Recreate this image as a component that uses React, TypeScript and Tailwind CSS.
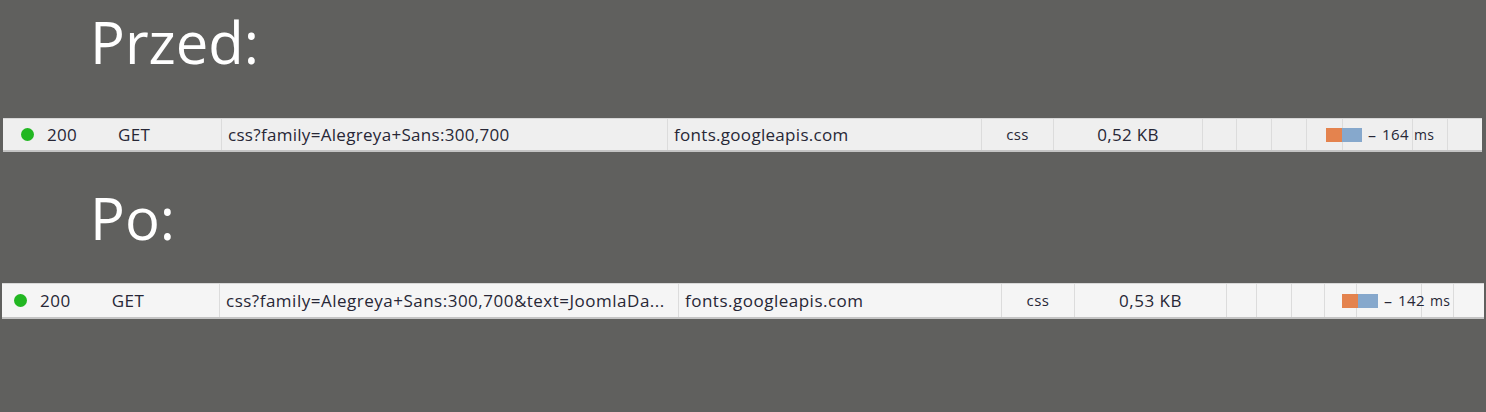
import React from "react";

type RowProps = {
  rowCls: string;
  c1: string;
  c2: string;
  c3: string;
  c4: string;
  c5: string;
  dotCls: string;
  codeCls: string;
  getCls: string;
  url: string;
  size: string;
  ms: string;
  lines: string[];
  barCls: string;
};

function NetRow(p: RowProps) {
  return (
    <div
      className={`flex border-t border-t-[#d8d8d8] border-b-2 border-b-[#c4c4c4] text-[#272736] text-[17px] leading-none font-['Open_Sans','Liberation_Sans',sans-serif] ${p.rowCls}`}
    >
      <div className={`flex items-center border-r border-[#dcdcdc] shrink-0 ${p.c1}`}>
        <span className={`w-[13px] h-[13px] rounded-full bg-[#22b722] shrink-0 ${p.dotCls}`} />
        <span className={p.codeCls}>200</span>
        <span className={p.getCls}>GET</span>
      </div>
      <div className={`flex items-center border-r border-[#dcdcdc] shrink-0 pl-[6px] whitespace-nowrap overflow-hidden ${p.c2}`}>
        {p.url}
      </div>
      <div className={`flex items-center border-r border-[#dcdcdc] shrink-0 pl-[6px] ${p.c3}`}>
        fonts.googleapis.com
      </div>
      <div className={`flex items-center justify-center border-r border-[#dcdcdc] shrink-0 text-[15px] ${p.c4}`}>
        css
      </div>
      <div className={`flex items-center justify-center border-r border-[#dcdcdc] shrink-0 ${p.c5}`}>
        {p.size}
      </div>
      <div className="relative flex flex-1">
        {p.lines.map((w, i) => (
          <div key={i} className={`border-r border-[#dcdcdc] shrink-0 h-full ${w}`} />
        ))}
        <div className={`absolute inset-y-0 flex items-center tracking-normal ${p.barCls}`}>
          <span className="w-[16px] h-[14px] bg-[#e4834e]" />
          <span className="w-[20px] h-[14px] bg-[#86a8cc]" />
          <span className="ml-[6px] text-[16px]">–</span>
          <span className="ml-[6px] text-[15px] tracking-[0.4px]">{p.ms}</span>
          <span className="ml-[5px] text-[14px] tracking-[0.4px]">ms</span>
        </div>
      </div>
    </div>
  );
}

export default function App() {
  return (
    <div className="w-[1486px] h-[412px] bg-[#60605e] overflow-hidden flex flex-col">
      <div className="h-[118px] shrink-0 pt-[13px] pl-[90px] text-white text-[58px] leading-[58px] font-['Open_Sans','Liberation_Sans',sans-serif]">
        Przed:
      </div>
      <NetRow
        rowCls="h-[34px] ml-[3px] w-[1479px] bg-[#efefef] tracking-[0.3px]"
        c1="w-[219px]"
        c2="w-[446px]"
        c3="w-[314px]"
        c4="w-[72px]"
        c5="w-[149px]"
        dotCls="ml-[18px]"
        codeCls="ml-[13px]"
        getCls="ml-[41px]"
        url="css?family=Alegreya+Sans:300,700"
        size="0,52 KB"
        ms="164"
        lines={["w-[34px]", "w-[35px]", "w-[35px]", "w-[36px]", "w-[70px]", "w-[35px]"]}
        barCls="left-[123px]"
      />
      <div className="h-[131px] shrink-0 pt-[37px] pl-[90px] text-white text-[58px] leading-[58px] font-['Open_Sans','Liberation_Sans',sans-serif]">
        Po:
      </div>
      <NetRow
        rowCls="h-[36px] ml-[2px] w-[1482px] bg-[#f5f5f5] tracking-[0.5px]"
        c1="w-[218px]"
        c2="w-[459px]"
        c3="w-[323px]"
        c4="w-[73px]"
        c5="w-[152px]"
        dotCls="ml-[12px]"
        codeCls="ml-[13px]"
        getCls="ml-[41px]"
        url="css?family=Alegreya+Sans:300,700&text=JoomlaDa..."
        size="0,53 KB"
        ms="142"
        lines={["w-[30px]", "w-[35px]", "w-[33px]", "w-[32px]", "w-[65px]", "w-[32px]"]}
        barCls="left-[115px]"
      />
    </div>
  );
}
